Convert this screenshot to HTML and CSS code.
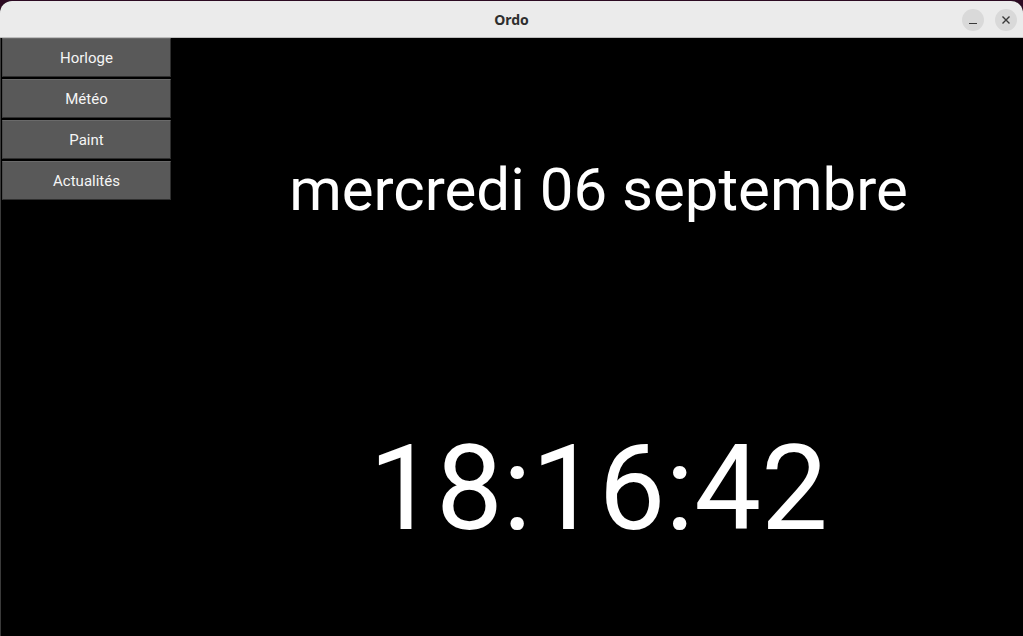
FILE: index.html
```html
<!DOCTYPE html>
<html lang="fr">
<head>
<meta charset="utf-8">
<title>Ordo</title>
<link rel="stylesheet" href="styles.css">
</head>
<body>
<div class="window">
  <header class="titlebar">
    <div class="title">Ordo</div>
    <div class="controls">
      <span class="ctl"><svg width="10" height="10" viewBox="0 0 10 10"><path d="M1 8.5 H9" stroke="#3a3a3a" stroke-width="1.2"/></svg></span>
      <span class="ctl"><svg width="10" height="10" viewBox="0 0 10 10"><path d="M1.5 1.5 L8.5 8.5 M8.5 1.5 L1.5 8.5" stroke="#3a3a3a" stroke-width="1.4"/></svg></span>
    </div>
  </header>
  <main class="body">
    <nav class="menu">
      <button class="btn">Horloge</button>
      <button class="btn">Météo</button>
      <button class="btn">Paint</button>
      <button class="btn">Actualités</button>
    </nav>
    <section class="clock">
      <div class="date">mercredi 06 septembre</div>
      <div class="time">18:16:42</div>
    </section>
  </main>
</div>
</body>
</html>
```
FILE: styles.css
```css
html, body {
  margin: 0;
  padding: 0;
  background: #2c0a22;
  width: 1023px;
  height: 636px;
  overflow: hidden;
}
.window {
  margin-top: 1px;
  width: 1023px;
  height: 635px;
  display: flex;
  flex-direction: column;
  border-radius: 12px 12px 0 0;
  overflow: hidden;
  background: #000;
}
.titlebar {
  height: 36px;
  flex: none;
  background: #ebebeb;
  border-bottom: 1px solid #bdbdbd;
  position: relative;
  display: flex;
  align-items: center;
  justify-content: center;
}
.title {
  font-family: "Noto Sans", "DejaVu Sans", sans-serif;
  font-weight: bold;
  font-size: 14px;
  color: #2e2e2e;
  padding-top: 1px;
}
.controls {
  position: absolute;
  right: 6px;
  top: 8px;
  display: flex;
  gap: 11px;
}
.ctl {
  width: 22px;
  height: 22px;
  border-radius: 50%;
  background: #d9d9d9;
  display: flex;
  align-items: center;
  justify-content: center;
}
.body {
  flex: 1;
  display: flex;
  background: #000;
  border-left: 1px solid #3a3a3a;
}
.menu {
  width: 170px;
  flex: none;
  display: flex;
  flex-direction: column;
  gap: 2px;
  padding-left: 1px;
  padding-top: 0;
}
.btn {
  height: 39px;
  width: 169px;
  margin: 0;
  background: #595959;
  border: 1px solid #2f2f2f;
  border-top-color: #6a6a6a;
  border-left-color: #4a4a4a;
  color: #f5f5f5;
  font-family: Roboto, "Liberation Sans", sans-serif;
  font-size: 15px;
  padding: 0;
}
.clock {
  flex: 1;
  display: flex;
  flex-direction: column;
  align-items: center;
  color: #fff;
  font-family: Roboto, "Liberation Sans", sans-serif;
  padding-left: 2px;
}
.date {
  font-size: 60px;
  line-height: 70px;
  margin-top: 117px;
}
.time {
  font-size: 119px;
  line-height: 140px;
  margin-top: 194px;
}
```
